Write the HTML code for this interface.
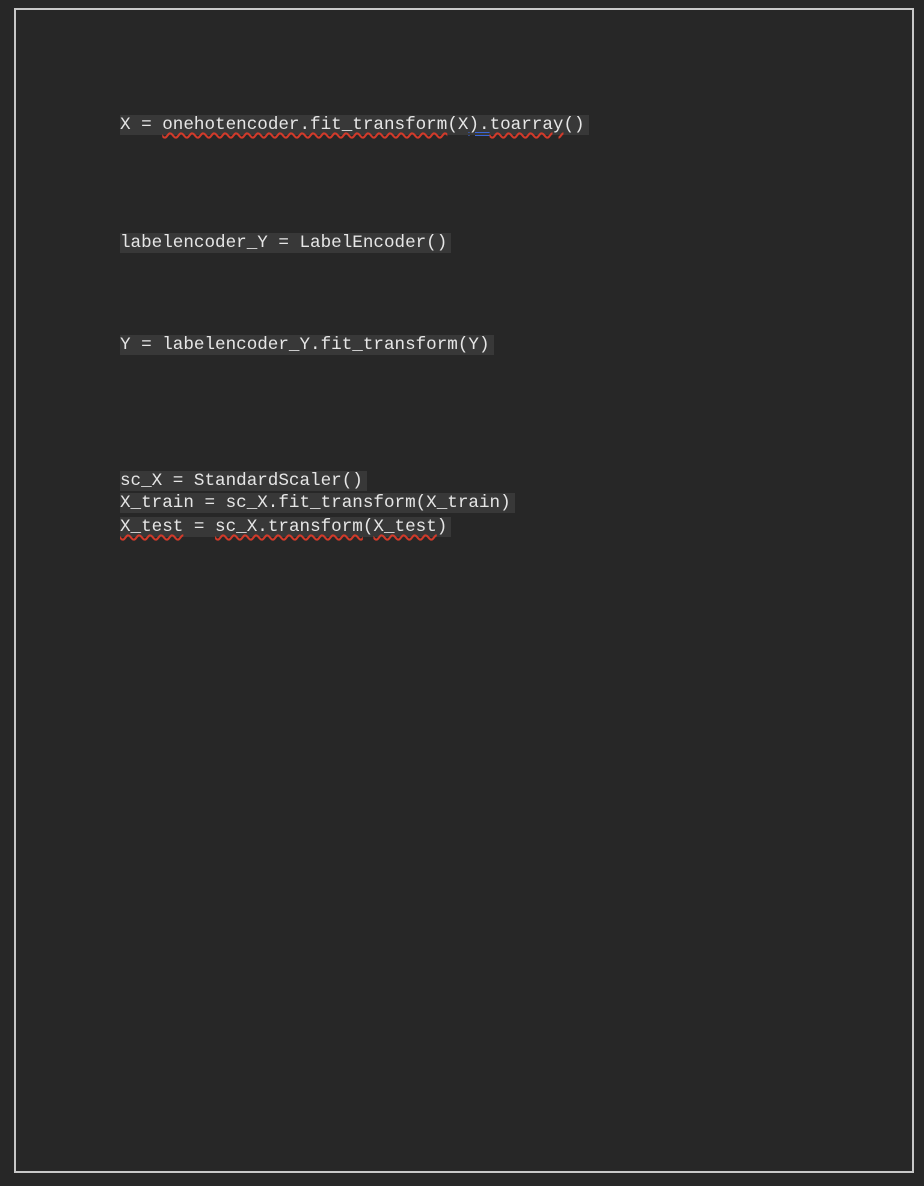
<!DOCTYPE html>
<html><head><style>
body{margin:0;width:924px;height:1186px;background:#272727;position:relative;overflow:hidden}
.frame{position:absolute;left:14px;top:8px;width:900px;height:1165px;border:2px solid #c8c8c8;box-sizing:border-box}
.l{position:absolute;left:120px;height:20px;line-height:20px;font-family:"Liberation Mono",monospace;font-size:17.6px;color:#e6e6e6;background:#383838;white-space:pre;padding-right:4px}
.w{text-decoration:underline wavy #d23a2a;text-underline-offset:3px;text-decoration-thickness:1.5px}
.b{text-decoration:underline double #3a66d8;text-underline-offset:3px}
</style></head><body>
<div class="frame"></div>
<div class="l" style="top:115px">X = <span class="w">onehotencoder.fit_transform</span>(X<span class="b">).</span><span class="w">toarray</span>()</div>
<div class="l" style="top:233px">labelencoder_Y = LabelEncoder()</div>
<div class="l" style="top:335px">Y = labelencoder_Y.fit_transform(Y)</div>
<div class="l" style="top:471px">sc_X = StandardScaler()</div>
<div class="l" style="top:493px">X_train = sc_X.fit_transform(X_train)</div>
<div class="l" style="top:517px"><span class="w">X_test</span> = <span class="w">sc_X.transform</span>(<span class="w">X_test</span>)</div>
</body></html>
